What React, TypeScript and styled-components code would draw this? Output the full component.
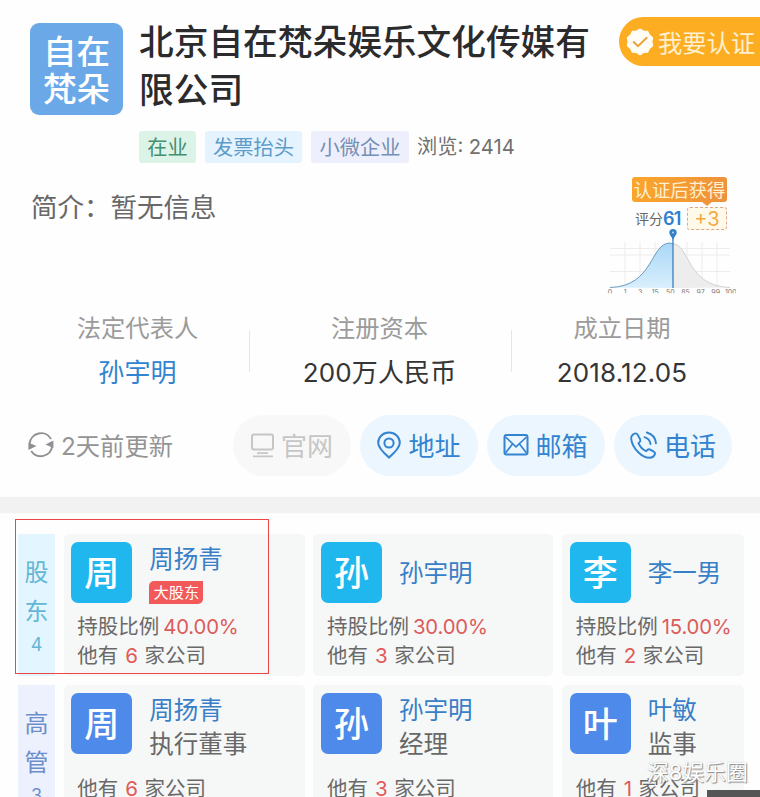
import React from "react";
import styled, { createGlobalStyle, css } from "styled-components";

const GlobalStyle = createGlobalStyle`
  * { box-sizing: border-box; }
  body {
    margin: 0;
    background: #fefefe;
    font-family: Inter, "Noto Sans CJK SC", sans-serif;
    overflow: hidden;
  }
`;

const Page = styled.main`
  position: relative;
  width: 760px;
  height: 797px;
  overflow: hidden;
  background: #fefefe;
  white-space: nowrap;
`;

const Header = styled.header`
  display: grid;
  grid-template-columns: 92px 480px 141px;
  column-gap: 17px;
  height: 163px;
  padding: 17px 0 0 30px;
`;

const Logo = styled.div`
  width: 93px;
  height: 92px;
  margin-top: 6px;
  padding-top: 11px;
  border-radius: 9px;
  background: #6ba8e8;
  color: #fff;
  font-size: 33.5px;
  font-weight: 500;
  line-height: 37px;
  text-align: center;
`;

const Title = styled.h1`
  margin: 1px 0 0;
  width: 456px;
  color: #2b2b2e;
  font-size: 34.7px;
  font-weight: 500;
  line-height: 48px;
`;

const Tags = styled.div`
  display: flex;
  align-items: center;
  margin-top: 17px;
  height: 32px;
`;

const Tag = styled.span<{ $bg: string; $color: string; $width: number }>`
  width: ${(p) => p.$width}px;
  height: 32px;
  margin-right: 9px;
  border-radius: 3px;
  background: ${(p) => p.$bg};
  color: ${(p) => p.$color};
  font-size: 20.3px;
  line-height: 34px;
  text-align: center;
`;

const Views = styled.span`
  margin-left: -1px;
  color: #707070;
  font-size: 20.2px;
  line-height: 34px;
`;

const CertifyButton = styled.button`
  display: flex;
  align-items: center;
  gap: 4px;
  width: 150px;
  height: 49px;
  margin-left: -17px;
  padding: 0 0 0 7px;
  border: 0;
  border-radius: 25px 0 0 25px;
  background: #fcad22;
  color: #fff0cf;
  font-family: inherit;
  font-size: 24.3px;
`;

const Intro = styled.section`
  display: flex;
  justify-content: space-between;
  height: 137px;
  padding: 14px 24px 0 31px;
`;

const IntroText = styled.p`
  margin: 11px 0 0;
  color: #686868;
  font-size: 26.5px;
  line-height: 38px;
`;

const Score = styled.div`
  display: flex;
  flex-direction: column;
  width: 130px;
`;

const Bubble = styled.div`
  position: relative;
  width: 95px;
  height: 25px;
  margin-left: 26px;
  border-radius: 3px;
  background: linear-gradient(100deg, #fba62a, #ee913d);
  color: #fff0d0;
  font-size: 18.4px;
  line-height: 26px;
  text-align: center;
  &::after {
    content: "";
    position: absolute;
    left: 69px;
    top: 24px;
    border: 6px solid transparent;
    border-top: 5px solid #f0953b;
    border-bottom: 0;
  }
`;

const ScoreLine = styled.div`
  display: flex;
  align-items: center;
  height: 24px;
  margin: 4px 0 0 29px;
  color: #666;
  font-size: 14px;
`;

const ScoreValue = styled.b`
  width: 20px;
  color: #2e7fd0;
  font-size: 18px;
  font-weight: 600;
  letter-spacing: -0.7px;
`;

const Bonus = styled.span`
  width: 40px;
  height: 23px;
  margin-left: 4px;
  border: 1px dashed #dca88c;
  border-radius: 3px;
  background: #fff9ea;
  color: #f5a942;
  font-size: 20px;
  line-height: 22px;
  text-align: center;
`;

const Chart = styled.svg`
  display: block;
  margin-top: -2px;
  flex: none;
`;

const Stats = styled.section`
  display: grid;
  grid-template-columns: 222px 262px 223px;
  height: 104px;
  padding: 14px 0 0 27px;
`;

const Stat = styled.div<{ $divided?: boolean }>`
  position: relative;
  display: flex;
  flex-direction: column;
  text-align: center;
  ${(p) =>
    p.$divided &&
    css`
      &::after {
        content: "";
        position: absolute;
        right: -1px;
        top: 16px;
        width: 1px;
        height: 42px;
        background: #e6e6e6;
      }
    `}
`;

const StatLabel = styled.span`
  margin-left: -1px;
  color: #9b9b9b;
  font-size: 24.3px;
  line-height: 28px;
`;

const StatValue = styled.span<{ $link?: boolean }>`
  margin: 15px 0 0 -1px;
  color: ${(p) => (p.$link ? "#3284d0" : "#353535")};
  font-size: 26px;
  line-height: 32px;
  letter-spacing: 0.15px;
`;

const Actions = styled.section`
  display: flex;
  align-items: center;
  gap: 9px;
  height: 61px;
  margin-top: 11px;
  padding-left: 27px;
`;

const Updated = styled.div`
  display: flex;
  align-items: center;
  gap: 6px;
  width: 197px;
  padding-bottom: 2px;
  color: #949494;
  font-size: 24.3px;
`;

const Action = styled.button<{ $muted?: boolean }>`
  display: flex;
  align-items: center;
  justify-content: center;
  gap: 6px;
  width: 118px;
  height: 61px;
  padding: 0 1px 2px 0;
  border: 0;
  border-radius: 31px;
  background: ${(p) => (p.$muted ? "#f8f8f8" : "#ecf6fe")};
  color: ${(p) => (p.$muted ? "#c6c6c6" : "#3384d0")};
  font-family: inherit;
  font-size: 26px;
`;

const Band = styled.div`
  height: 16px;
  margin-top: 21px;
  background: #f2f2f2;
  box-shadow: 0 0 2px #f4f4f4;
`;

const People = styled.section`
  display: flex;
  flex-direction: column;
  gap: 9px;
  padding: 21px 16px 0 18px;
`;

const PeopleRow = styled.div`
  display: grid;
  grid-template-columns: 37px 241px 240px 182px;
  column-gap: 8.7px;
  height: 142px;
`;

const Side = styled.div<{ $manager?: boolean }>`
  display: flex;
  flex-direction: column;
  align-items: center;
  padding-top: 20px;
  background: ${(p) => (p.$manager ? "#ecf1fd" : "#e3f5fe")};
  color: ${(p) => (p.$manager ? "#6d8ecb" : "#62b7d7")};
  font-size: 24px;
  line-height: 38.5px;
`;

const SideCount = styled.span`
  font-size: 18px;
  line-height: 28px;
`;

const Card = styled.article`
  display: flex;
  flex-direction: column;
  padding: 8px 0 0 7.6px;
  border-radius: 5px;
  background: #f6f7f7;
  overflow: hidden;
`;

const CardTop = styled.div`
  display: flex;
  gap: 17px;
  height: 61px;
`;

const Avatar = styled.div<{ $manager?: boolean }>`
  width: 61px;
  height: 61px;
  border-radius: 7px;
  background: ${(p) => (p.$manager ? "#4d8ae9" : "#20b7ef")};
  color: #fff;
  font-size: 35px;
  font-weight: 500;
  line-height: 63px;
  text-align: center;
`;

const Identity = styled.div<{ $centered?: boolean }>`
  display: flex;
  flex-direction: column;
  align-items: flex-start;
  padding-top: ${(p) => (p.$centered ? 15 : 1)}px;
`;

const Name = styled.span`
  color: #387fc8;
  font-size: 24.5px;
  line-height: 32px;
`;

const Role = styled.span`
  margin-top: 2px;
  color: #686868;
  font-size: 24.5px;
  line-height: 32px;
`;

const Badge = styled.span`
  width: 54px;
  height: 23px;
  margin-top: 6px;
  border-radius: 5px 0 5px 0;
  background: #f15a59;
  color: #fff;
  font-size: 15.2px;
  line-height: 24px;
  text-align: center;
`;

const Facts = styled.div<{ $low?: boolean }>`
  display: flex;
  flex-direction: column;
  margin: ${(p) => (p.$low ? 21 : 10)}px 0 0 6px;
  color: #696969;
  font-size: 20.5px;
  line-height: 28.5px;
`;

const Percent = styled.span`
  margin-left: 4px;
  color: #db5c5b;
  font-size: 20.3px;
  letter-spacing: -0.15px;
`;

const Count = styled.span`
  margin: 0 6.5px 0 7px;
  color: #e05b59;
`;

const Highlight = styled.div`
  position: absolute;
  left: 15px;
  top: 519px;
  width: 254px;
  height: 155px;
  border: 1px solid #ed4444;
`;

const Watermark = styled.div`
  position: absolute;
  left: 647px;
  top: 756px;
  color: #fff;
  font-size: 21.8px;
  line-height: 32px;
  text-shadow: 1px 1px 1px #888, 0 0 1px #bbb;
`;

const CornerBar = styled.div`
  position: absolute;
  left: 707px;
  top: 790px;
  width: 53px;
  height: 7px;
  background: #555;
`;

const VerifiedIcon = () => (
  <svg width="28" height="28" viewBox="0 0 28 28">
    <path
      d="M14 1 L17.5 3.1 L21.6 3.3 L23.4 7 L26.6 9.7 L25.8 13.7 L26.6 17.8 L23.4 20.5 L21.6 24.2 L17.5 24.4 L14 26.8 L10.5 24.4 L6.4 24.2 L4.6 20.5 L1.4 17.8 L2.2 13.7 L1.4 9.7 L4.6 7 L6.4 3.3 L10.5 3.1Z"
      fill="#fffdf5"
      stroke="#fffdf5"
      strokeWidth="1.2"
      strokeLinejoin="round"
    />
    <path d="M7.2 13.5 L12 18.2 L21.2 9.3" fill="none" stroke="#e8a53e" strokeWidth="2" />
  </svg>
);

const RefreshIcon = () => (
  <svg width="28" height="28" viewBox="0 0 28 28" fill="none" stroke="#909090" strokeWidth="1.9">
    <path d="M2.6 12.5 A11.5 11.5 0 0 1 24 8" />
    <path d="M25.2 15 A11.5 11.5 0 0 1 4.2 20" />
    <path d="M1.4 11.5 L1.4 19 L9.5 15Z M26.4 9.5 L26.4 17 L18.5 13.5Z" fill="#909090" stroke="none" />
  </svg>
);

const MonitorIcon = () => (
  <svg width="25" height="26" viewBox="0 0 25 26" fill="none" stroke="currentColor" strokeWidth="2">
    <rect x="2" y="2.5" width="21" height="15" rx="2" />
    <path d="M7 21.2 H18 M3 24.3 H23" strokeWidth="1.8" />
  </svg>
);

const PinIcon = () => (
  <svg width="26" height="28" viewBox="0 0 26 28" fill="none" stroke="currentColor" strokeWidth="2">
    <path d="M13 26.5 C9.5 23.5 2.2 17.5 2.2 11.8 C2.2 5.8 7 1.5 13 1.5 C19 1.5 23.8 5.8 23.8 11.8 C23.8 17.5 16.5 23.5 13 26.5Z" />
    <circle cx="13" cy="12" r="4.6" />
  </svg>
);

const MailIcon = () => (
  <svg width="26" height="24" viewBox="0 0 26 24" fill="none" stroke="currentColor" strokeWidth="2">
    <rect x="1.5" y="2" width="23" height="19.5" rx="2" />
    <path d="M2.5 4 L13 13.8 L23.5 4 M2.5 20 L9.5 11 M23.5 20 L16.5 11" strokeWidth="1.7" />
  </svg>
);

const PhoneIcon = () => (
  <svg
    width="29"
    height="30"
    viewBox="0 0 29 30"
    fill="none"
    stroke="currentColor"
    strokeWidth="1.9"
    strokeLinecap="round"
    strokeLinejoin="round"
  >
    <path d="M5.6 3.6 C3.4 4.5 2 6.4 2.2 8.8 C2.7 13.4 5.8 18.8 9.3 22.2 C12.8 25.7 16.6 27.7 20.5 27.8 C23 27.9 25 26.4 25.8 24.4 C26.3 23.2 25.9 22.3 24.9 21.7 L21.2 19.6 C20.1 19 19.2 19.2 18.4 20 L17.2 21.2 C14 19.8 10.8 16.4 9.5 13.2 L10.8 11.9 C11.5 11.1 11.6 10.3 11.1 9.3 L8.6 4.6 C7.8 3.4 6.8 3.1 5.6 3.6Z" />
    <path d="M15.5 7.2 C18.8 8.2 21 10.4 21.5 14 M17.8 2.5 C23 4 26.5 7.7 27 13.3" />
  </svg>
);

const axisTicks = ["0", "1", "3", "15", "50", "85", "97", "99", "100"];

const ScoreChart = () => (
  <Chart width="130" height="70" viewBox="0 0 130 70">
    <defs>
      <linearGradient id="area" x1="0" x2="0" y1="0" y2="1">
        <stop offset="0" stopColor="#a9d7f6" />
        <stop offset="1" stopColor="#d9effd" />
      </linearGradient>
      <clipPath id="axisClip">
        <rect x="0" y="60" width="130" height="5.2" />
      </clipPath>
    </defs>
    <path
      d="M4 20.5 H124 M4 27 H124 M4 43.5 H124 M19 14 V60 M34 14 V60 M49 14 V60 M81 14 V60 M96 14 V60 M111 14 V60"
      stroke="#ececec"
      fill="none"
    />
    <path d="M67 15.8 C84 17 80 58 124 59.5 L67 60Z" fill="#ededed" />
    <path d="M4 59.5 C48 58.5 44 15 64 15 L67 15.8 V60Z" fill="url(#area)" />
    <path d="M67 15.8 C84 17 80 58 124 59.5" stroke="#d2d2d2" fill="none" />
    <path d="M4 59.5 C48 58.5 44 15 64 15 L67 15.8" stroke="#6c9bc0" fill="none" />
    <path d="M67 10 V60" stroke="#4786c0" strokeWidth="1.4" />
    <path d="M67 12 C65.8 8.8 63.3 7 63.3 4.8 A3.7 3.7 0 0 1 70.7 4.8 C70.7 7 68.2 8.8 67 12Z" fill="#3480c7" />
    <circle cx="67" cy="4.6" r="1" fill="#b7d8f2" />
    <g fill="#777" fontSize="7" textAnchor="middle" clipPath="url(#axisClip)">
      {axisTicks.map((t, i) => (
        <text key={t} x={4 + i * 15.1} y="67">
          {t}
        </text>
      ))}
    </g>
  </Chart>
);

type Person = {
  name: string;
  companies: number;
  percent?: string;
  badge?: string;
  role?: string;
};

const shareholders: Person[] = [
  { name: "周扬青", companies: 6, percent: "40.00%", badge: "大股东" },
  { name: "孙宇明", companies: 3, percent: "30.00%" },
  { name: "李一男", companies: 2, percent: "15.00%" },
];

const managers: Person[] = [
  { name: "周扬青", companies: 6, role: "执行董事" },
  { name: "孙宇明", companies: 3, role: "经理" },
  { name: "叶敏", companies: 1, role: "监事" },
];

const PersonCard = ({ person }: { person: Person }) => (
  <Card>
    <CardTop>
      <Avatar $manager={!!person.role}>{person.name[0]}</Avatar>
      <Identity $centered={!person.role && !person.badge}>
        <Name>{person.name}</Name>
        {person.badge && <Badge>{person.badge}</Badge>}
        {person.role && <Role>{person.role}</Role>}
      </Identity>
    </CardTop>
    <Facts $low={!!person.role}>
      {person.percent && (
        <div>
          持股比例<Percent>{person.percent}</Percent>
        </div>
      )}
      <div>
        他有<Count>{person.companies}</Count>家公司
      </div>
    </Facts>
  </Card>
);

export default function App() {
  return (
    <Page>
      <GlobalStyle />
      <Header>
        <Logo>
          自在
          <br />
          梵朵
        </Logo>
        <div>
          <Title>
            北京自在梵朵娱乐文化传媒有
            <br />
            限公司
          </Title>
          <Tags>
            <Tag $bg="#dcf4e8" $color="#438f70" $width={57}>在业</Tag>
            <Tag $bg="#e4f3fe" $color="#5d9bc9" $width={97}>发票抬头</Tag>
            <Tag $bg="#eeeffc" $color="#7490b5" $width={98}>小微企业</Tag>
            <Views>浏览: 2414</Views>
          </Tags>
        </div>
        <CertifyButton>
          <VerifiedIcon />
          我要认证
        </CertifyButton>
      </Header>

      <Intro>
        <IntroText>简介：暂无信息</IntroText>
        <Score>
          <Bubble>认证后获得</Bubble>
          <ScoreLine>
            评分<ScoreValue>61</ScoreValue>
            <Bonus>+3</Bonus>
          </ScoreLine>
          <ScoreChart />
        </Score>
      </Intro>

      <Stats>
        <Stat $divided>
          <StatLabel>法定代表人</StatLabel>
          <StatValue $link>孙宇明</StatValue>
        </Stat>
        <Stat $divided>
          <StatLabel>注册资本</StatLabel>
          <StatValue>200万人民币</StatValue>
        </Stat>
        <Stat>
          <StatLabel>成立日期</StatLabel>
          <StatValue>2018.12.05</StatValue>
        </Stat>
      </Stats>

      <Actions>
        <Updated>
          <RefreshIcon />
          2天前更新
        </Updated>
        <Action $muted>
          <MonitorIcon />
          官网
        </Action>
        <Action>
          <PinIcon />
          地址
        </Action>
        <Action>
          <MailIcon />
          邮箱
        </Action>
        <Action>
          <PhoneIcon />
          电话
        </Action>
      </Actions>

      <Band />

      <People>
        <PeopleRow>
          <Side>
            <span>股</span>
            <span>东</span>
            <SideCount>4</SideCount>
          </Side>
          {shareholders.map((p) => (
            <PersonCard key={p.name} person={p} />
          ))}
        </PeopleRow>
        <PeopleRow>
          <Side $manager>
            <span>高</span>
            <span>管</span>
            <SideCount>3</SideCount>
          </Side>
          {managers.map((p) => (
            <PersonCard key={p.name} person={p} />
          ))}
        </PeopleRow>
      </People>

      <Highlight />
      <Watermark>深8娱乐圈</Watermark>
      <CornerBar />
    </Page>
  );
}
